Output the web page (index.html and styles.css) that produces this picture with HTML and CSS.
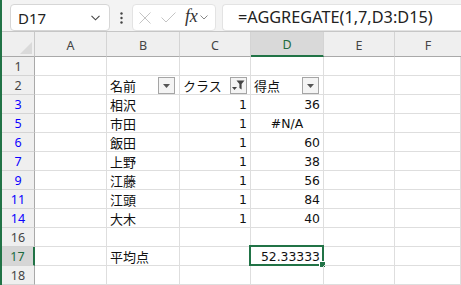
FILE: index.html
```html
<!DOCTYPE html>
<html lang="ja">
<head>
<meta charset="utf-8">
<title>AGGREGATE</title>
<link rel="stylesheet" href="styles.css">
</head>
<body>
<div class="app">
  <div class="fbar">
    <div class="namebox">
      <span class="ref">D17</span>
      <svg class="chev" width="9" height="6" viewBox="0 0 9 6"><path d="M0.5 0.8 L4.5 4.8 L8.5 0.8" fill="none" stroke="#444" stroke-width="1.1"/></svg>
    </div>
    <div class="grip">
      <svg width="3" height="12" viewBox="0 0 3 12"><circle cx="1.5" cy="1.5" r="1.2" fill="#444"/><circle cx="1.5" cy="6" r="1.2" fill="#444"/><circle cx="1.5" cy="10.5" r="1.2" fill="#444"/></svg>
    </div>
    <div class="btnbox">
      <svg class="ico-x" width="12" height="12" viewBox="0 0 12 12"><path d="M0.5 0.5 L11.5 11.5 M11.5 0.5 L0.5 11.5" stroke="#c4c4c4" stroke-width="1"/></svg>
      <svg class="ico-ok" width="15" height="11" viewBox="0 0 15 11"><path d="M0.5 5.5 L5 10 L14.5 0.5" fill="none" stroke="#c4c4c4" stroke-width="1"/></svg>
      <span class="fx">fx</span>
      <svg class="chev2" width="8" height="5" viewBox="0 0 8 5"><path d="M0.5 0.5 L4 4 L7.5 0.5" fill="none" stroke="#888" stroke-width="1"/></svg>
    </div>
    <div class="formula">=AGGREGATE(1,7,D3:D15)</div>
  </div>

  <div class="sheet">
    <div class="corner"><svg width="12" height="12" viewBox="0 0 12 12"><path d="M12 0 L12 12 L0 12 Z" fill="#dadada"/></svg></div>
    <div class="ch">A</div>
    <div class="ch">B</div>
    <div class="ch">C</div>
    <div class="ch ch-sel">D</div>
    <div class="ch">E</div>
    <div class="ch ch-last">F</div>

    <div class="rh">1</div><div class="c"></div><div class="c"></div><div class="c"></div><div class="c"></div><div class="c"></div><div class="c"></div>

    <div class="rh">2</div><div class="c"></div>
    <div class="c"><span>名前</span><span class="fbtn"><svg width="7" height="4" viewBox="0 0 7 4"><path d="M0 0 H7 L3.5 4 Z" fill="#555"/></svg></span></div>
    <div class="c"><span>クラス</span><span class="fbtn fbtn-on"><svg width="13" height="11" viewBox="0 0 13 11"><path d="M0 7 H5 L2.5 10 Z" fill="#444"/><path d="M4.5 0.5 H12.5 L9.6 4 V9.5 L7.4 8 V4 Z" fill="#444"/></svg></span></div>
    <div class="c"><span>得点</span><span class="fbtn"><svg width="7" height="4" viewBox="0 0 7 4"><path d="M0 0 H7 L3.5 4 Z" fill="#555"/></svg></span></div>
    <div class="c"></div><div class="c"></div>

    <div class="rh rh-f">3</div><div class="c"></div><div class="c">相沢</div><div class="c num">1</div><div class="c num">36</div><div class="c"></div><div class="c"></div>
    <div class="rh rh-f">5</div><div class="c"></div><div class="c">市田</div><div class="c num">1</div><div class="c ctr">#N/A</div><div class="c"></div><div class="c"></div>
    <div class="rh rh-f">6</div><div class="c"></div><div class="c">飯田</div><div class="c num">1</div><div class="c num">60</div><div class="c"></div><div class="c"></div>
    <div class="rh rh-f">7</div><div class="c"></div><div class="c">上野</div><div class="c num">1</div><div class="c num">38</div><div class="c"></div><div class="c"></div>
    <div class="rh rh-f">9</div><div class="c"></div><div class="c">江藤</div><div class="c num">1</div><div class="c num">56</div><div class="c"></div><div class="c"></div>
    <div class="rh rh-f">11</div><div class="c"></div><div class="c">江頭</div><div class="c num">1</div><div class="c num">84</div><div class="c"></div><div class="c"></div>
    <div class="rh rh-f">14</div><div class="c"></div><div class="c">大木</div><div class="c num">1</div><div class="c num">40</div><div class="c"></div><div class="c"></div>
    <div class="rh">16</div><div class="c"></div><div class="c"></div><div class="c"></div><div class="c"></div><div class="c"></div><div class="c"></div>
    <div class="rh rh-sel">17</div><div class="c"></div><div class="c">平均点</div><div class="c"></div><div class="c num active">52.33333<span class="selbox"></span><span class="handle"></span></div><div class="c"></div><div class="c"></div>
    <div class="rh">18</div><div class="c"></div><div class="c"></div><div class="c"></div><div class="c"></div><div class="c"></div><div class="c"></div>
  </div>
</div>
</body>
</html>
```

FILE: styles.css
```css
* { box-sizing: border-box; }
html, body { margin: 0; padding: 0; background: #fff; }
body { width: 461px; height: 285px; overflow: hidden; }

.app {
  border-left: 2px solid #217346;
  height: 285px;
  font-family: "Noto Sans CJK JP", "Noto Sans", sans-serif;
}

/* formula bar */
.fbar {
  height: 31px;
  background: #f3f3f3;
  display: flex;
  align-items: flex-start;
  padding: 4px 0 0 8px;
}
.namebox {
  width: 100px;
  height: 27px;
  background: #fff;
  border: 1px solid #d6d6d6;
  border-radius: 4px;
  display: flex;
  align-items: center;
  justify-content: space-between;
  padding: 0 9px 0 7px;
}
.ref {
  font-family: "Noto Sans", sans-serif;
  font-size: 15px;
  color: #222;
}
.grip {
  width: 22px;
  height: 27px;
  display: flex;
  align-items: center;
  justify-content: center;
}
.btnbox {
  width: 84px;
  height: 27px;
  background: #fff;
  border: 1px solid #e3e3e3;
  border-radius: 4px;
  display: flex;
  align-items: center;
  padding: 0 0 0 6px;
}
.ico-x { margin-right: 10px; }
.ico-ok { margin-right: 9px; }
.fx {
  font-family: "Liberation Serif", serif;
  font-style: italic;
  font-size: 18px;
  color: #333;
  margin-right: 3px;
  margin-top: -2px;
  letter-spacing: -0.3px;
}
.formula {
  flex: 1;
  height: 27px;
  margin-left: 6px;
  background: #fff;
  border: 1px solid #e3e3e3;
  border-right: none;
  border-radius: 4px 0 0 4px;
  padding: 0 0 0 15px;
  font-family: "Noto Sans", sans-serif;
  font-size: 16.3px;
  line-height: 25px;
  color: #222;
  white-space: nowrap;
}

/* sheet grid */
.sheet {
  display: grid;
  grid-template-columns: 33px 72px 73px 71px 73px 71px 1fr;
  grid-template-rows: 25px;
  grid-auto-rows: 19px;
  border-top: 1px solid #c6c6c6;
}
.corner {
  background: #efefef;
  border-right: 1px solid #c8c8c8;
  border-bottom: 1px solid #a9a9a9;
  display: flex;
  align-items: flex-end;
  justify-content: flex-end;
  padding: 0 2px 2px 0;
}
.ch {
  background: #efefef;
  border-right: 1px solid #d4d4d4;
  border-bottom: 1px solid #a9a9a9;
  font-family: "Noto Sans", sans-serif;
  font-size: 12.5px;
  color: #444;
  display: flex;
  align-items: center;
  justify-content: center;
  padding-top: 2px;
}
.ch-sel {
  background: #d9d9d9;
  color: #1d6b3f;
  border-bottom: 2px solid #217346;
}
.ch-last { border-right: none; }

.rh {
  background: #efefef;
  border-right: 1px solid #a9a9a9;
  border-bottom: 1px solid #d4d4d4;
  font-family: "Noto Sans", sans-serif;
  font-size: 12.5px;
  color: #444;
  display: flex;
  align-items: center;
  justify-content: center;
  padding-top: 1px;
}
.rh-f { color: #0b00ff; }
.rh-sel {
  background: #d6d6d6;
  color: #1d6b3f;
  border-right: 2px solid #217346;
}

.c {
  position: relative;
  border-right: 1px solid #dedede;
  border-bottom: 1px solid #dedede;
  font-size: 13px;
  color: #111;
  display: flex;
  align-items: center;
  padding: 1px 3px 0 3px;
  white-space: nowrap;
}
.num, .ctr {
  font-family: "DejaVu Sans", sans-serif;
  font-size: 12.4px;
}
.num { justify-content: flex-end; }
.ctr { justify-content: center; }

.fbtn {
  margin-left: auto;
  margin-right: 1px;
  width: 17px;
  height: 17px;
  border: 1px solid #a5a5a5;
  background: #f4f4f4;
  display: flex;
  align-items: center;
  justify-content: center;
}
.fbtn-on { margin-right: 0; }

.active .selbox {
  position: absolute;
  left: -2px;
  top: -2px;
  right: -1px;
  bottom: -1px;
  border: 2px solid #217346;
}
.active .handle {
  position: absolute;
  right: -3px;
  bottom: -3px;
  width: 7px;
  height: 7px;
  background: #217346;
  border: 1px solid #fff;
}
```
